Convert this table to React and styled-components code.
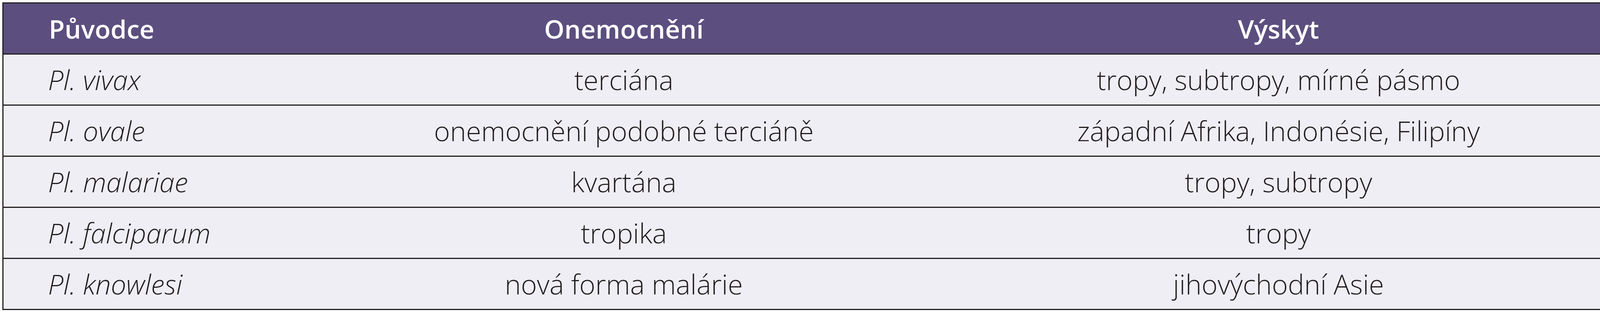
import React from "react";
import styled, { createGlobalStyle } from "styled-components";

const rows = [
  { agent: "Pl. vivax", disease: "terciána", area: "tropy, subtropy, mírné pásmo" },
  { agent: "Pl. ovale", disease: "onemocnění podobné terciáně", area: "západní Afrika, Indonésie, Filipíny" },
  { agent: "Pl. malariae", disease: "kvartána", area: "tropy, subtropy" },
  { agent: "Pl. falciparum", disease: "tropika", area: "tropy" },
  { agent: "Pl. knowlesi", disease: "nová forma malárie", area: "jihovýchodní Asie" },
];

const GlobalStyle = createGlobalStyle`
  html, body {
    margin: 0;
    padding: 0;
    background: #ffffff;
  }
  body {
    font-family: "Open Sans", "Noto Sans", sans-serif;
  }
`;

const Page = styled.div`
  width: 4146px;
  height: 800px;
  padding: 6px 3px 4px 6px;
  box-sizing: border-box;
`;

const Table = styled.div`
  border: 3px solid #231f20;
  display: grid;
  grid-template-columns: 779px 1618px 1fr;
  background: #efeef5;
`;

const HeadCell = styled.div`
  height: 128px;
  background: #5c4f7f;
  color: #ffffff;
  font-weight: 600;
  font-size: 66px;
  display: flex;
  align-items: center;
  justify-content: ${(p) => (p.$left ? "flex-start" : "center")};
  padding-left: ${(p) => (p.$left ? "116px" : "0")};
  border-bottom: 3px solid #231f20;
`;

const Cell = styled.div`
  height: 128px;
  color: #231f20;
  font-weight: 300;
  font-size: 70px;
  font-style: ${(p) => (p.$italic ? "italic" : "normal")};
  display: flex;
  align-items: center;
  justify-content: ${(p) => (p.$left ? "flex-start" : "center")};
  padding-left: ${(p) => (p.$left ? "114px" : "0")};
  border-bottom: ${(p) => (p.$last ? "none" : "3px solid #231f20")};
  white-space: nowrap;
`;

export default function App() {
  return (
    <>
      <GlobalStyle />
      <Page>
        <Table>
          <HeadCell $left>Původce</HeadCell>
          <HeadCell>Onemocnění</HeadCell>
          <HeadCell>Výskyt</HeadCell>
          {rows.map((r, i) => {
            const last = i === rows.length - 1;
            return (
              <React.Fragment key={r.agent}>
                <Cell $left $italic $last={last}>{r.agent}</Cell>
                <Cell $last={last}>{r.disease}</Cell>
                <Cell $last={last}>{r.area}</Cell>
              </React.Fragment>
            );
          })}
        </Table>
      </Page>
    </>
  );
}
